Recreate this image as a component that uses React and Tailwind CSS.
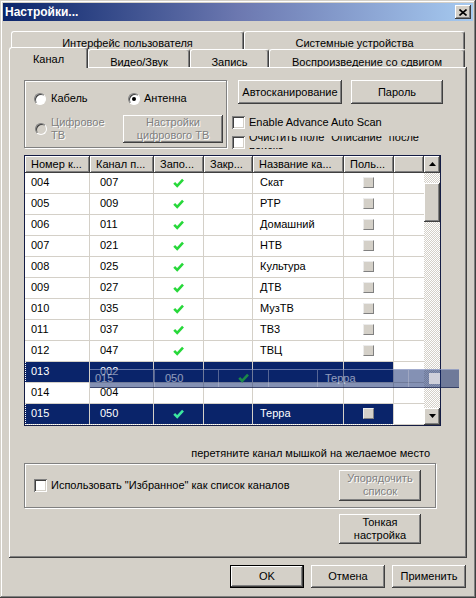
import React from 'react';

// Win2k classic bevels
const raised = "shadow-[inset_-1px_-1px_0_#404040,inset_1px_1px_0_#ffffff,inset_-2px_-2px_0_#808080,inset_2px_2px_0_#d4d0c8]";
const sunken = "shadow-[inset_1px_1px_0_#808080,inset_-1px_-1px_0_#ffffff,inset_2px_2px_0_#404040,inset_-2px_-2px_0_#d4d0c8]";
const etched = "border border-[#808080] shadow-[inset_1px_1px_0_#ffffff,1px_1px_0_#ffffff]";
const disabledText = "text-[#808080] [text-shadow:1px_1px_0_#ffffff]";
const tabBase = "bg-[#d4d0c8] border-t border-l border-r border-t-white border-l-white border-r-[#404040] rounded-t-[3px] shadow-[inset_-1px_0_0_#808080] flex justify-center";

const channels = [
  { n: '004', c: '007', tick: true, name: 'Скат', box: true },
  { n: '005', c: '009', tick: true, name: 'РТР', box: true },
  { n: '006', c: '011', tick: true, name: 'Домашний', box: true },
  { n: '007', c: '021', tick: true, name: 'НТВ', box: true },
  { n: '008', c: '025', tick: true, name: 'Культура', box: true },
  { n: '009', c: '027', tick: true, name: 'ДТВ', box: true },
  { n: '010', c: '035', tick: true, name: 'МузТВ', box: true },
  { n: '011', c: '037', tick: true, name: 'ТВ3', box: true },
  { n: '012', c: '047', tick: true, name: 'ТВЦ', box: true },
  { n: '013', c: '002', sel: true, focusLeft: true },
  { n: '014', c: '004' },
  { n: '015', c: '050', tick: true, name: 'Терра', box: true, sel: true, focus: true },
];

const headers = ['Номер к...', 'Канал п...', 'Запо...', 'Закр...', 'Название ка...', 'Поль...'];
const colW = ['w-[65px]', 'w-[64px]', 'w-[50px]', 'w-[49px]', 'w-[91px]', 'w-[50px]'];

function Button({ className = '', disabled, isDefault, children }) {
  return (
    <div
      className={`flex items-center justify-center text-center leading-[13px] bg-[#d4d0c8] ${raised} ${
        disabled ? disabledText : 'text-black'
      } ${isDefault ? 'border border-black' : ''} ${className}`}
    >
      {children}
    </div>
  );
}

function CheckBox() {
  return <span className={`block w-[13px] h-[13px] shrink-0 bg-white ${sunken}`} />;
}

function Radio({ checked, disabled }) {
  return (
    <span
      className={`relative block w-[12px] h-[12px] shrink-0 rounded-full border border-t-[#808080] border-l-[#808080] border-b-white border-r-white shadow-[inset_1px_1px_0_#404040] ${
        disabled ? 'bg-[#d4d0c8]' : 'bg-white'
      }`}
    >
      {checked && <span className="absolute left-[3px] top-[3px] w-[4px] h-[4px] rounded-full bg-black" />}
    </span>
  );
}

function Tick({ color = '#27d83a' }) {
  return (
    <svg width="11" height="10" viewBox="0 0 11 10">
      <path d="M1.2 4.8 L4.2 7.8 L10 1.6" fill="none" stroke={color} strokeWidth="2.6" />
    </svg>
  );
}

function SmallBox({ className = '' }) {
  return (
    <span
      className={`block w-[11px] h-[11px] bg-[#d4d0c8] border border-t-[#ececec] border-l-[#ececec] border-b-[#808080] border-r-[#808080] ${className}`}
    />
  );
}

function Arrow({ down }) {
  return (
    <svg width="7" height="4" viewBox="0 0 7 4">
      <path d={down ? 'M0 0 H7 L3.5 4 Z' : 'M0 4 H7 L3.5 0 Z'} fill="#000" />
    </svg>
  );
}

function ChannelRow({ r }) {
  const cell = 'h-[21px] border-r border-b border-[#d4d0c8] flex items-center shrink-0';
  return (
    <div className="flex h-[21px]">
      <div className={`relative flex ${r.sel ? 'bg-[#0a246a] text-white' : 'bg-white text-black'}`}>
        <div className={`${cell} ${colW[0]} pl-[6px]`}>{r.n}</div>
        <div className={`${cell} ${colW[1]} pl-[10px]`}>{r.c}</div>
        <div className={`${cell} ${colW[2]} justify-center`}>{r.tick && <Tick color={r.sel ? '#3ce8a0' : '#27d83a'} />}</div>
        <div className={`${cell} ${colW[3]}`} />
        <div className={`${cell} ${colW[4]} pl-[7px]`}>{r.name}</div>
        <div className={`${cell} ${colW[5]} justify-center`}>{r.box && <SmallBox />}</div>
        {r.focus && <span className="absolute inset-0 border-l border-b border-dotted border-white" />}
        {r.focusLeft && <span className="absolute inset-0 border-l border-dotted border-white" />}
      </div>
      <div className="w-[30px] h-[21px] bg-white border-b border-[#d4d0c8]" />
    </div>
  );
}

function ChannelTable() {
  return (
    <div className="relative mt-[6px] w-[417px] h-[271px] border border-[#141c44] flex bg-white">
      <div className="w-[399px] flex flex-col">
        <div className="flex h-[17px]">
          {headers.map((h, i) => (
            <div key={h} className={`${colW[i]} h-[17px] pl-[6px] flex items-center bg-[#d4d0c8] ${raised}`}>
              {h}
            </div>
          ))}
          <div className={`w-[30px] h-[17px] bg-[#d4d0c8] ${raised}`} />
        </div>
        {channels.map((r) => (
          <ChannelRow key={r.n} r={r} />
        ))}
      </div>
      {/* scrollbar */}
      <div className="w-[16px] flex flex-col bg-[image:repeating-conic-gradient(#d4d0c8_0%_25%,#ffffff_0%_50%)] bg-[length:2px_2px]">
        <div className={`h-[17px] flex items-center justify-center bg-[#d4d0c8] ${raised}`}>
          <Arrow />
        </div>
        <div className="h-[10px]" />
        <div className={`h-[39px] bg-[#d4d0c8] ${raised}`} />
        <div className="flex-1" />
        <div className={`h-[17px] flex items-center justify-center bg-[#d4d0c8] ${raised}`}>
          <Arrow down />
        </div>
      </div>

      {/* drag ghost of row 015 */}
      <div className="absolute left-[65px] top-[213px] w-[369px] h-[19px] flex bg-[#0a246a]/50 text-white/55 border-t border-[#c0c8e8]/50 border-b border-b-[#101840]/60">
        <div className="w-[65px] pl-[5px] flex items-center border-r border-[#c8c8d8]/40">015</div>
        <div className="w-[64px] pl-[10px] flex items-center border-r border-[#c8c8d8]/40">050</div>
        <div className="w-[50px] flex items-center justify-center border-r border-[#c8c8d8]/40">
          <Tick color="#1b8a48" />
        </div>
        <div className="w-[49px] border-r border-[#c8c8d8]/40" />
        <div className="w-[91px] pl-[7px] flex items-center border-r border-[#c8c8d8]/40">Терра</div>
        <div className="w-[50px] flex items-center justify-center">
          <span className="block w-[11px] h-[11px] bg-[#d8d8e0]/90" />
        </div>
      </div>
    </div>
  );
}

export default function App() {
  return (
    <div className="w-[476px] h-[598px] bg-[#d4d0c8] p-[3px] flex flex-col font-['Liberation_Sans',Arial,sans-serif] text-[11px] text-black shadow-[inset_-1px_-1px_0_#404040,inset_1px_1px_0_#d4d0c8,inset_-2px_-2px_0_#808080,inset_2px_2px_0_#ffffff]">
      {/* title bar */}
      <div className="h-[18px] flex items-center justify-between pl-[2px] pr-[2px] bg-linear-to-r from-[#0a246a] via-[#6c78b0] to-[#a6caf0]">
        <span className="text-white font-bold text-[12px]">Настройки...</span>
        <div className={`w-[16px] h-[14px] flex items-center justify-center bg-[#d4d0c8] ${raised}`}>
          <svg width="8" height="7" viewBox="0 0 8 7">
            <path d="M0.5 0.5 L7.5 6.5 M7.5 0.5 L0.5 6.5" stroke="#000" strokeWidth="1.6" />
          </svg>
        </div>
      </div>

      {/* tabs, back row */}
      <div className="mt-[10px] ml-[8px] flex h-[18px]">
        <div className={`${tabBase} w-[233px] h-[18px] pt-[3px]`}>Интерфейс пользователя</div>
        <div className={`${tabBase} w-[221px] h-[18px] pt-[3px]`}>Системные устройства</div>
      </div>
      {/* tabs, front row */}
      <div className="ml-[6px] flex items-end h-[18px]">
        <div className={`${tabBase} relative z-10 w-[79px] h-[21px] -mb-[1px] pt-[3px]`}>Канал</div>
        <div className={`${tabBase} w-[102px] h-[18px] pt-[4px]`}>Видео/Звук</div>
        <div className={`${tabBase} w-[79px] h-[18px] pt-[4px]`}>Запись</div>
        <div className={`${tabBase} w-[196px] h-[18px] pt-[4px]`}>Воспроизведение со сдвигом</div>
      </div>

      {/* tab panel */}
      <div className={`ml-[6px] w-[458px] h-[491px] pl-[15px] pt-[13px] flex flex-col ${raised}`}>
        <div className="flex items-start">
          {/* source group */}
          <div className={`w-[203px] h-[68px] ${etched} flex flex-col`}>
            <div className="mt-[11px] ml-[9px] flex items-center h-[13px]">
              <div className="w-[94px] flex items-center gap-[5px]">
                <Radio />
                <span>Кабель</span>
              </div>
              <div className="flex items-center gap-[4px]">
                <Radio checked />
                <span>Антенна</span>
              </div>
            </div>
            <div className="mt-[10px] ml-[10px] flex items-center">
              <div className="w-[88px] flex items-center gap-[4px]">
                <Radio disabled />
                <span className={`leading-[13px] ${disabledText}`}>
                  Цифровое
                  <br />
                  ТВ
                </span>
              </div>
              <Button disabled className="w-[100px] h-[28px]">
                Настройки
                <br />
                цифрового ТВ
              </Button>
            </div>
          </div>

          {/* scan controls */}
          <div className="ml-[5px] flex flex-col">
            <div className="ml-[6px] flex">
              <Button className="w-[104px] h-[24px]">Автосканирование</Button>
              <Button className="ml-[9px] w-[92px] h-[24px]">Пароль</Button>
            </div>
            <div className="mt-[10px] flex items-center gap-[4px]">
              <CheckBox />
              <span>Enable Advance Auto Scan</span>
            </div>
            <div className="mt-[5px] flex items-center gap-[4px]">
              <CheckBox />
              <div className="h-[13px] overflow-hidden">
                <div className="-mt-[5px] leading-[13px]">
                  Очистить поле "Описание" после
                  <br />
                  поиска
                </div>
              </div>
            </div>
          </div>
        </div>

        <ChannelTable />

        <div className="mt-[21px] w-[406px] text-right leading-[13px]">перетяните канал мышкой на желаемое место</div>

        <div className={`mt-[3px] w-[412px] h-[45px] ${etched} flex items-center justify-between pl-[9px] pr-[14px]`}>
          <div className="flex items-center gap-[4px]">
            <CheckBox />
            <span>Использовать "Избранное" как список каналов</span>
          </div>
          <Button disabled className="w-[82px] h-[31px]">
            Упорядочить
            <br />
            список
          </Button>
        </div>

        <Button className="mt-[6px] ml-[315px] w-[82px] h-[30px]">
          Тонкая
          <br />
          настройка
        </Button>
      </div>

      {/* dialog buttons */}
      <div className="mt-[7px] pr-[7px] flex justify-end gap-[7px]">
        <Button isDefault className="w-[74px] h-[23px]">OK</Button>
        <Button className="w-[74px] h-[23px]">Отмена</Button>
        <Button className="w-[74px] h-[23px]">Применить</Button>
      </div>
    </div>
  );
}
